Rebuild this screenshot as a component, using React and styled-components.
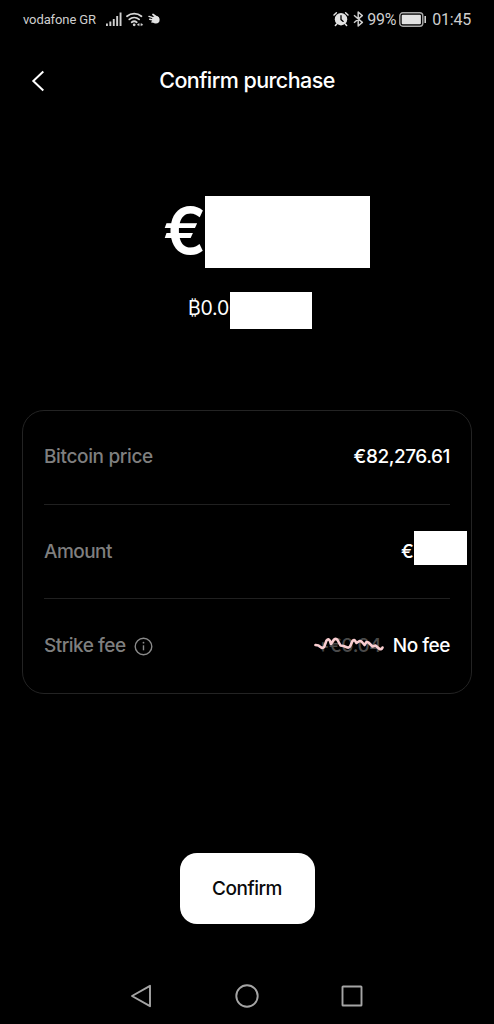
import React from 'react'
import styled, {createGlobalStyle} from 'styled-components'

const GlobalStyle = createGlobalStyle`
	* {
		box-sizing: border-box;
	}

	body {
		margin: 0;
		background: #000;
	}
`;

const Screen = styled.div`
	display: flex;
	flex-direction: column;
	align-items: center;
	width: 494px;
	height: 1024px;
	overflow: hidden;
	background: #000;
	color: #fff;
	font-family: Inter, 'Liberation Sans', sans-serif;
`;

const StatusBar = styled.div`
	display: flex;
	align-items: center;
	justify-content: space-between;
	width: 100%;
	height: 38px;
	padding: 0 23px;
	color: #cfcfcf;
	font-family: Roboto, sans-serif;
`;

const StatusGroup = styled.div`
	display: flex;
	align-items: center;
`;

const StatusText = styled.span`
	margin-left: ${props => props.$gap || 0}px;
	padding-top: 1px;
	font-size: ${props => props.$size}px;
	line-height: 20px;
	letter-spacing: ${props => props.$spacing || 0}px;
	white-space: nowrap;
`;

const StatusIcon = styled.svg`
	display: block;
	margin-left: ${props => props.$gap || 0}px;
`;

const Header = styled.header`
	display: grid;
	grid-template-columns: 76px 1fr 76px;
	align-items: center;
	width: 100%;
	height: 84px;
`;

const BackButton = styled.button`
	display: flex;
	padding: 2px 0 0 30px;
	border: 0;
	background: none;
	color: #fff;
`;

const Title = styled.h1`
	margin: 0;
	font-size: 21.5px;
	font-weight: 500;
	line-height: 28px;
	letter-spacing: -0.57px;
	text-align: center;
`;

const Summary = styled.section`
	display: flex;
	flex-direction: column;
	width: 100%;
	height: 288px;
	padding-top: 74px;
`;

const BigAmount = styled.div`
	display: flex;
	align-items: center;
	height: 72px;
	padding-left: 163px;
	font-size: 64px;
	font-weight: 600;
	line-height: 70px;
`;

const BigSymbol = styled.span`
	width: 42px;
	height: 72px;
`;

const BitcoinAmount = styled.div`
	display: flex;
	align-items: flex-start;
	height: 37px;
	margin-top: 24px;
	padding-left: 188px;
	font-size: 19.5px;
	line-height: 33px;
	letter-spacing: -0.25px;
`;

const BitcoinDigits = styled.span`
	width: 42px;
	white-space: nowrap;
`;

const Mask = styled.span`
	position: relative;
	flex: none;
	width: ${props => props.$width}px;
	height: ${props => props.$height}px;
	margin-right: ${props => props.$overhang ? -props.$overhang : 0}px;
	margin-bottom: ${props => props.$lift || 0}px;
	background: #fff;
`;

const Card = styled.section`
	width: 450px;
	height: 284px;
	padding: 0 21px;
	border: 1px solid #232323;
	border-radius: 22px;
`;

const Row = styled.div`
	display: flex;
	align-items: center;
	justify-content: space-between;
	height: ${props => props.$height}px;
	padding-bottom: ${props => props.$lift || 0}px;
	border-bottom: ${props => props.$last ? 'none' : '1px solid #202020'};
`;

const Label = styled.span`
	display: flex;
	align-items: center;
	gap: 8px;
	color: #7f7f7f;
	font-size: 19px;
	font-weight: 500;
	line-height: 24px;
	letter-spacing: ${props => props.$spacing || -0.36}px;
`;

const Value = styled.span`
	display: flex;
	align-items: center;
	height: 24px;
	font-size: 19px;
	font-weight: 500;
	line-height: 24px;
	letter-spacing: ${props => props.$spacing || -0.45}px;
	white-space: nowrap;
`;

const OldFee = styled.span`
	position: relative;
	width: 70px;
	margin-right: 9px;
	padding-left: 3px;
	color: #4a4a4a;
`;

const Scribble = styled.svg`
	position: absolute;
	top: 1px;
	left: 0;
`;

const ConfirmButton = styled.button`
	width: 135px;
	height: 71px;
	margin-top: 159px;
	border: 0;
	border-radius: 17px;
	background: #fff;
	color: #0a0a0a;
	font-family: inherit;
	font-size: 19px;
	font-weight: 500;
	letter-spacing: -0.5px;
`;

const NavBar = styled.nav`
	display: flex;
	align-items: center;
	justify-content: space-between;
	width: 234px;
	height: 24px;
	margin-top: 60px;
`;

const SignalIcon = () => (
	<StatusIcon $gap={10} width="16" height="15" viewBox="0 0 16 15" fill="#cfcfcf">
		<rect x="0" y="11.5" width="1.9" height="2.5"/>
		<rect x="3.4" y="9.5" width="1.9" height="4.5"/>
		<rect x="6.8" y="7" width="1.9" height="7"/>
		<rect x="10.2" y="4" width="1.9" height="10"/>
		<rect x="13.6" y="0.5" width="1.9" height="13.5"/>
	</StatusIcon>
)

const WifiIcon = () => (
	<StatusIcon $gap={4} width="18" height="15" viewBox="0 0 18 15" fill="none" stroke="#d6d6d6" strokeWidth="1.8" strokeLinecap="round">
		<path d="M1 4.2a11.5 11.5 0 0 1 14.4 0"/>
		<path d="M3.3 7.4a7.8 7.8 0 0 1 9.8 0"/>
		<path d="M5.7 10.2a4.2 4.2 0 0 1 5 0"/>
		<circle cx="8.2" cy="12.8" r="1.4" fill="#d6d6d6" stroke="none"/>
		<path d="M11.4 12.5l1.8-1v2zM16.7 12.5l-1.8-1v2z" fill="#d6d6d6" strokeWidth=".5"/>
	</StatusIcon>
)

const HandIcon = () => (
	<StatusIcon $gap={4} width="13" height="12" viewBox="0 0 13 12">
		<path d="M5 1.5L10 5" stroke="#e2e2e2" strokeWidth="1.8" strokeLinecap="round"/>
		<path d="M1 3.4l6 2M1.7 6.2l5 1M4 9l3-1" stroke="#e2e2e2" strokeWidth="1.5" strokeLinecap="round"/>
		<circle cx="7.8" cy="6.7" r="3.8" fill="#e2e2e2"/>
	</StatusIcon>
)

const AlarmIcon = () => (
	<StatusIcon width="16" height="16" viewBox="0 0 16 16" fill="none" strokeLinecap="round">
		<circle cx="8" cy="8.2" r="6.2" fill="#e2e2e2"/>
		<path d="M1 4l2.4-2.2M15 4l-2.4-2.2M3.7 13l-1.3 1.5M12.3 13l1.3 1.5" stroke="#e2e2e2" strokeWidth="1.5"/>
		<path d="M8 4.6v4l2.2 1.8" stroke="#000" strokeWidth="1.3"/>
	</StatusIcon>
)

const BluetoothIcon = () => (
	<StatusIcon $gap={4} width="11" height="16" viewBox="0 0 11 16" fill="none" stroke="#cfcfcf" strokeWidth="1.5" strokeLinejoin="round">
		<path d="M1 4.3l8.3 7.1L5.2 15V1l4.1 3.6L1 11.7"/>
	</StatusIcon>
)

const BatteryIcon = () => (
	<StatusIcon $gap={3} width="28" height="15" viewBox="0 0 28 15" fill="none">
		<rect x=".8" y=".8" width="23" height="13.4" rx="3" stroke="#a9a9a9" strokeWidth="1.4"/>
		<rect x="2.7" y="2.7" width="19.2" height="9.6" rx="1" fill="#e2e2e2"/>
		<path d="M26.2 4v7" stroke="#cfcfcf" strokeWidth="1.6"/>
	</StatusIcon>
)

const InfoIcon = () => (
	<svg width="19" height="19" viewBox="0 0 19 19" fill="none" stroke="#8a8a8a" strokeWidth="1.4">
		<circle cx="9.5" cy="9.5" r="8.3"/>
		<path d="M9.5 8.3v5"/>
		<circle cx="9.5" cy="5.7" r=".9" fill="#8a8a8a" stroke="none"/>
	</svg>
)

const App = () => (
	<Screen>
		<GlobalStyle/>
		<StatusBar>
			<StatusGroup>
				<StatusText $size={13} $spacing={-0.1}>vodafone GR</StatusText>
				<SignalIcon/>
				<WifiIcon/>
				<HandIcon/>
			</StatusGroup>
			<StatusGroup>
				<AlarmIcon/>
				<BluetoothIcon/>
				<StatusText $size={16} $spacing={-0.3} $gap={3}>99%</StatusText>
				<BatteryIcon/>
				<StatusText $size={16} $spacing={-0.2} $gap={5}>01:45</StatusText>
			</StatusGroup>
		</StatusBar>
		<Header>
			<BackButton aria-label="Back">
				<svg width="16" height="22" viewBox="0 0 16 22" fill="none" stroke="currentColor" strokeWidth="2">
					<path d="M13.3 1.5L3.3 11l10 9.5"/>
				</svg>
			</BackButton>
			<Title>Confirm purchase</Title>
		</Header>
		<Summary>
			<BigAmount>
				<BigSymbol>€</BigSymbol>
				<Mask $width={165} $height={72}/>
			</BigAmount>
			<BitcoinAmount>
				<BitcoinDigits>₿0.00</BitcoinDigits>
				<Mask $width={82} $height={37}/>
			</BitcoinAmount>
		</Summary>
		<Card>
			<Row $height={94} $lift={2}>
				<Label>Bitcoin price</Label>
				<Value>€82,276.61</Value>
			</Row>
			<Row $height={94}>
				<Label $spacing={-0.55}>Amount</Label>
				<Value $spacing={0.2}>€<Mask $width={53} $height={34} $overhang={17} $lift={8}/></Value>
			</Row>
			<Row $height={94} $last>
				<Label $spacing={-0.5}>Strike fee <InfoIcon/></Label>
				<Value>
					<OldFee>
						+€0.04
						<Scribble width="70" height="18" viewBox="0 0 70 18" fill="none" stroke="#f9cdd0" strokeWidth="2.6" strokeLinecap="round" strokeLinejoin="round">
							<path d="M1.500 10l3 .5 3 2.200q2 .8 3-1.700l2-5.500q2-2.500 3.500.5l1 3 3-4.500q2-1.500 3.500.5l3 5.500 3 .5 4 1.500q2 .5 3-2l2-4.500q2-2 3 .5l1 1.500 3-2 2 .5 3 3.500 2-3 2 .5 4 4 3-1 4 3.500q2 1 3-1.500"/>
						</Scribble>
					</OldFee>
					No fee
				</Value>
			</Row>
		</Card>
		<ConfirmButton>Confirm</ConfirmButton>
		<NavBar>
			<svg width="24" height="24" viewBox="0 0 24 24" fill="none" stroke="#a5a5a5" strokeWidth="1.9" strokeLinejoin="round">
				<path d="M20 1.8v20.4L2 12z"/>
			</svg>
			<svg width="24" height="24" viewBox="0 0 24 24" fill="none" stroke="#a5a5a5" strokeWidth="1.9">
				<circle cx="12" cy="12" r="10.7"/>
			</svg>
			<svg width="24" height="24" viewBox="0 0 24 24" fill="none" stroke="#a5a5a5" strokeWidth="1.9">
				<rect x="2.5" y="2.5" width="19" height="19" rx=".6"/>
			</svg>
		</NavBar>
	</Screen>
)

export default App
